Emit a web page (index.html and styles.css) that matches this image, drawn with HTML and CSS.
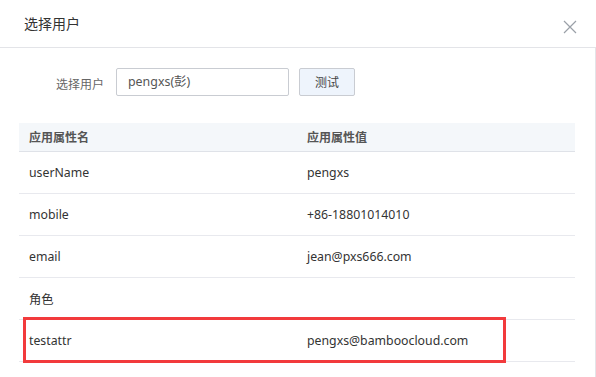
FILE: index.html
```html
<!DOCTYPE html>
<html lang="zh-CN">
<head>
    <meta charset="UTF-8">
    <meta name="viewport" content="width=device-width, initial-scale=1.0">
    <title>选择用户</title>
    <link rel="stylesheet" href="styles.css">
</head>
<body>
    <div class="dialogo">
        <div class="cabecera">
            <span class="titulo">选择用户</span>
            <span class="cerrar">
                <svg width="14" height="14" viewBox="0 0 14 14">
                    <path d="M1 1 L13 13 M13 1 L1 13" stroke="#9aa0a8" stroke-width="1.2" fill="none"/>
                </svg>
            </span>
        </div>
        <div class="cuerpo">
            <div class="fila-form">
                <label class="etiqueta">选择用户</label>
                <div class="entrada">pengxs(彭)</div>
                <button class="boton">测试</button>
            </div>
            <div class="tabla">
                <div class="fila encabezado">
                    <div class="celda">应用属性名</div>
                    <div class="celda">应用属性值</div>
                </div>
                <div class="fila">
                    <div class="celda">userName</div>
                    <div class="celda">pengxs</div>
                </div>
                <div class="fila">
                    <div class="celda">mobile</div>
                    <div class="celda">+86-18801014010</div>
                </div>
                <div class="fila">
                    <div class="celda">email</div>
                    <div class="celda">jean@pxs666.com</div>
                </div>
                <div class="fila">
                    <div class="celda">角色</div>
                    <div class="celda"></div>
                </div>
                <div class="fila">
                    <div class="celda">testattr</div>
                    <div class="celda">pengxs@bamboocloud.com</div>
                </div>
                <!-- recuadro rojo de anotación -->
                <div class="marca"></div>
            </div>
        </div>
    </div>
</body>
</html>
```

FILE: styles.css
```css
* {
    box-sizing: border-box;
}

body {
    margin: 0;
    background-color: #ffffff;
    font-family: "Noto Sans", "Noto Sans CJK SC", sans-serif;
    color: #333333;
    overflow: hidden;
}

.dialogo {
    width: 596px;
    height: 377px;
}

.cabecera {
    height: 48px;
    border-bottom: 1px solid #e3e4e8;
    display: flex;
    align-items: center;
    justify-content: space-between;
    padding: 0 19px 0 24px;
}

.titulo {
    font-size: 14px;
    color: #333333;
    margin-top: -2px;
}

.cerrar {
    display: flex;
    margin-top: 6px;
}

.cuerpo {
    border-right: 1px solid #e3e4e8;
    height: 329px;
    padding: 20px 20px 0 19px;
}

.fila-form {
    display: flex;
    align-items: center;
    padding-left: 37px;
}

.etiqueta {
    font-size: 12px;
    color: #666666;
    width: 60px;
    margin-top: 4px;
}

.entrada {
    width: 173px;
    height: 28px;
    border: 1px solid #c9ccd2;
    border-radius: 2px;
    padding: 0 0 0 11px;
    font-size: 12.4px;
    line-height: 26px;
    color: #555555;
}

.boton {
    margin-left: 10px;
    width: 56px;
    height: 28px;
    border: 1px solid #c9ccd2;
    border-radius: 2px;
    background-color: #eef4fc;
    font-family: "Noto Sans", "Noto Sans CJK SC", sans-serif;
    font-size: 12px;
    color: #444444;
    padding: 0;
}

.tabla {
    position: relative;
    margin-top: 27px;
    width: 556px;
}

.fila {
    display: flex;
    height: 42px;
    border-bottom: 1px solid #e8e9ee;
    align-items: center;
    font-size: 12.3px;
    color: #333333;
}

.fila.encabezado {
    height: 29px;
    background-color: #f4f7fa;
    border-bottom: 1px solid #dfe2e8;
    font-size: 12px;
    font-weight: bold;
    color: #555555;
}

.celda {
    width: 50%;
    padding-left: 10px;
}

.marca {
    position: absolute;
    left: 4px;
    top: 194px;
    width: 483px;
    height: 46px;
    border: 3px solid #f23a3c;
}
```
